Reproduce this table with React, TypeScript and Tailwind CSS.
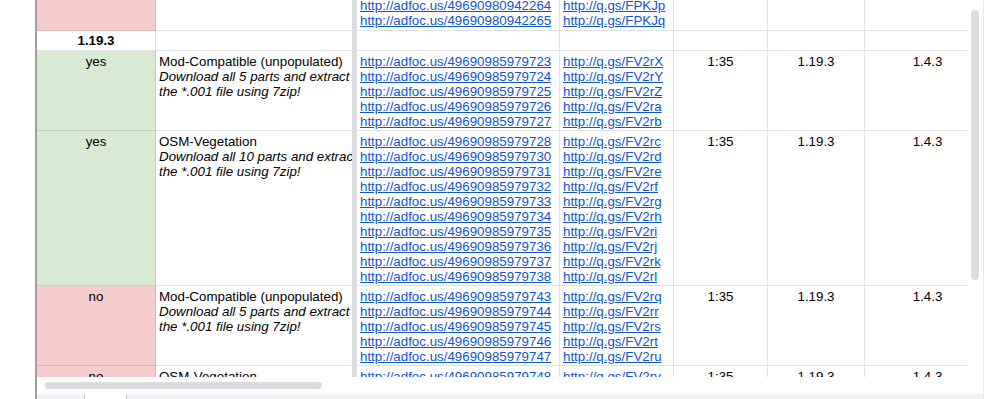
const FONT = "font-['Liberation_Sans',Arial,sans-serif]";

type RowData = {
  status: "yes" | "no" | "header";
  title?: string;
  parts?: number;
  adfoc: string[];
  qgs: string[];
  meta: boolean;
};

const rows: (RowData & { height: string; partial?: boolean; clipBottom?: boolean })[] = [
  {
    status: "no",
    adfoc: ["49690980942263", "49690980942264", "49690980942265"],
    qgs: ["FPKJo", "FPKJp", "FPKJq"],
    meta: false,
    height: "h-[31px]",
    partial: true,
  },
  { status: "header", adfoc: [], qgs: [], meta: false, height: "h-[20px]" },
  {
    status: "yes",
    title: "Mod-Compatible (unpopulated)",
    parts: 5,
    adfoc: ["49690985979723", "49690985979724", "49690985979725", "49690985979726", "49690985979727"],
    qgs: ["FV2rX", "FV2rY", "FV2rZ", "FV2ra", "FV2rb"],
    meta: true,
    height: "h-[80px]",
  },
  {
    status: "yes",
    title: "OSM-Vegetation",
    parts: 10,
    adfoc: [
      "49690985979728",
      "49690985979730",
      "49690985979731",
      "49690985979732",
      "49690985979733",
      "49690985979734",
      "49690985979735",
      "49690985979736",
      "49690985979737",
      "49690985979738",
    ],
    qgs: ["FV2rc", "FV2rd", "FV2re", "FV2rf", "FV2rg", "FV2rh", "FV2ri", "FV2rj", "FV2rk", "FV2rl"],
    meta: true,
    height: "h-[155px]",
  },
  {
    status: "no",
    title: "Mod-Compatible (unpopulated)",
    parts: 5,
    adfoc: ["49690985979743", "49690985979744", "49690985979745", "49690985979746", "49690985979747"],
    qgs: ["FV2rq", "FV2rr", "FV2rs", "FV2rt", "FV2ru"],
    meta: true,
    height: "h-[80px]",
  },
  {
    status: "no",
    title: "OSM-Vegetation",
    parts: 5,
    adfoc: ["49690985979748"],
    qgs: ["FV2rv"],
    meta: true,
    height: "h-[80px]",
    clipBottom: true,
  },
];

const SheetRow = ({ row }: { row: (typeof rows)[number] }) => {
  const statusCell =
    row.status === "yes"
      ? "bg-[#d9ead3] border-[#c3d3bd]"
      : row.status === "no"
        ? "bg-[#f4cccc] border-[#dcb8b8]"
        : "bg-white border-[#e2e2e2]";
  const linkBox = row.partial
    ? "flex flex-col justify-end pb-[2px] overflow-hidden"
    : "pt-[3px] overflow-hidden";

  return (
    <div className={`flex shrink-0 ${row.height}`}>
      <div
        className={`w-[119px] shrink-0 border-r border-b text-center text-black ${statusCell} ${
          row.status === "header" ? "flex items-center justify-center font-bold" : "pt-[3px]"
        }`}
      >
        {row.status === "header" ? "1.19.3" : row.partial ? "" : row.status}
      </div>

      <div className="w-[196px] shrink-0 border-b border-[#e2e2e2] pl-[3px] pt-[3px] overflow-hidden whitespace-nowrap text-black">
        {row.title && (
          <>
            <div>{row.title}</div>
            <div className="italic">Download all {row.parts} parts and extract</div>
            <div className="italic">the *.001 file using 7zip!</div>
          </>
        )}
      </div>

      <div className="w-[5px] shrink-0 bg-[#dadce0]" />

      <div className={`w-[203px] shrink-0 border-r border-b border-[#e2e2e2] pl-[3px] whitespace-nowrap ${linkBox}`}>
        {row.adfoc.map((id) => (
          <div key={id}>
            <a href="#" className="text-[#1155cc] underline">
              http://adfoc.us/{id}
            </a>
          </div>
        ))}
      </div>

      <div className={`w-[114px] shrink-0 border-r border-b border-[#e2e2e2] pl-[3px] whitespace-nowrap ${linkBox}`}>
        {row.qgs.map((id) => (
          <div key={id}>
            <a href="#" className="text-[#1155cc] underline">
              http://q.gs/{id}
            </a>
          </div>
        ))}
      </div>

      <div className="w-[94px] shrink-0 border-r border-b border-[#e2e2e2] pt-[3px] text-center text-black">
        {row.meta ? "1:35" : ""}
      </div>
      <div className="w-[97px] shrink-0 border-r border-b border-[#e2e2e2] pt-[3px] text-center text-black">
        {row.meta ? "1.19.3" : ""}
      </div>
      <div className="w-[126px] shrink-0 border-r border-b border-[#e2e2e2] pt-[3px] text-center text-black">
        {row.meta ? "1.4.3" : ""}
      </div>
    </div>
  );
};

const App = () => {
  return (
    <div className={`flex h-[399px] w-[992px] overflow-hidden bg-white text-[13.33px] leading-[15px] ${FONT}`}>
      <div className="w-[35px] shrink-0" />
      <div className="w-[2px] shrink-0 bg-[#9e9e9e]" />

      <div className="flex w-[946px] shrink-0 flex-col">
        <div className="flex h-[394px]">
          <div className="flex w-[930px] flex-col">
            <div className="flex h-[377px] flex-col overflow-hidden">
              {rows.map((row, i) => (
                <SheetRow key={i} row={row} />
              ))}
            </div>
            <div className="flex-1 pl-[8px] pt-[5px]">
              <div className="h-[7px] w-[277px] rounded-full bg-[#dadce0]" />
            </div>
          </div>
          <div className="flex w-[16px] justify-center pt-[10px]">
            <div className="h-[270px] w-[8px] rounded-full bg-[#dadce0]" />
          </div>
        </div>
        <div className="flex h-[5px] bg-[#f1f3f4]">
          <div className="w-[48px] border-r border-[#c4c7c5]" />
          <div className="w-[42px] bg-white border-r border-[#c4c7c5]" />
          <div className="flex-1" />
        </div>
      </div>

      <div className="w-[1px] shrink-0 bg-[#e8eaed]" />
      <div className="flex-1" />
    </div>
  );
};

export default App;
